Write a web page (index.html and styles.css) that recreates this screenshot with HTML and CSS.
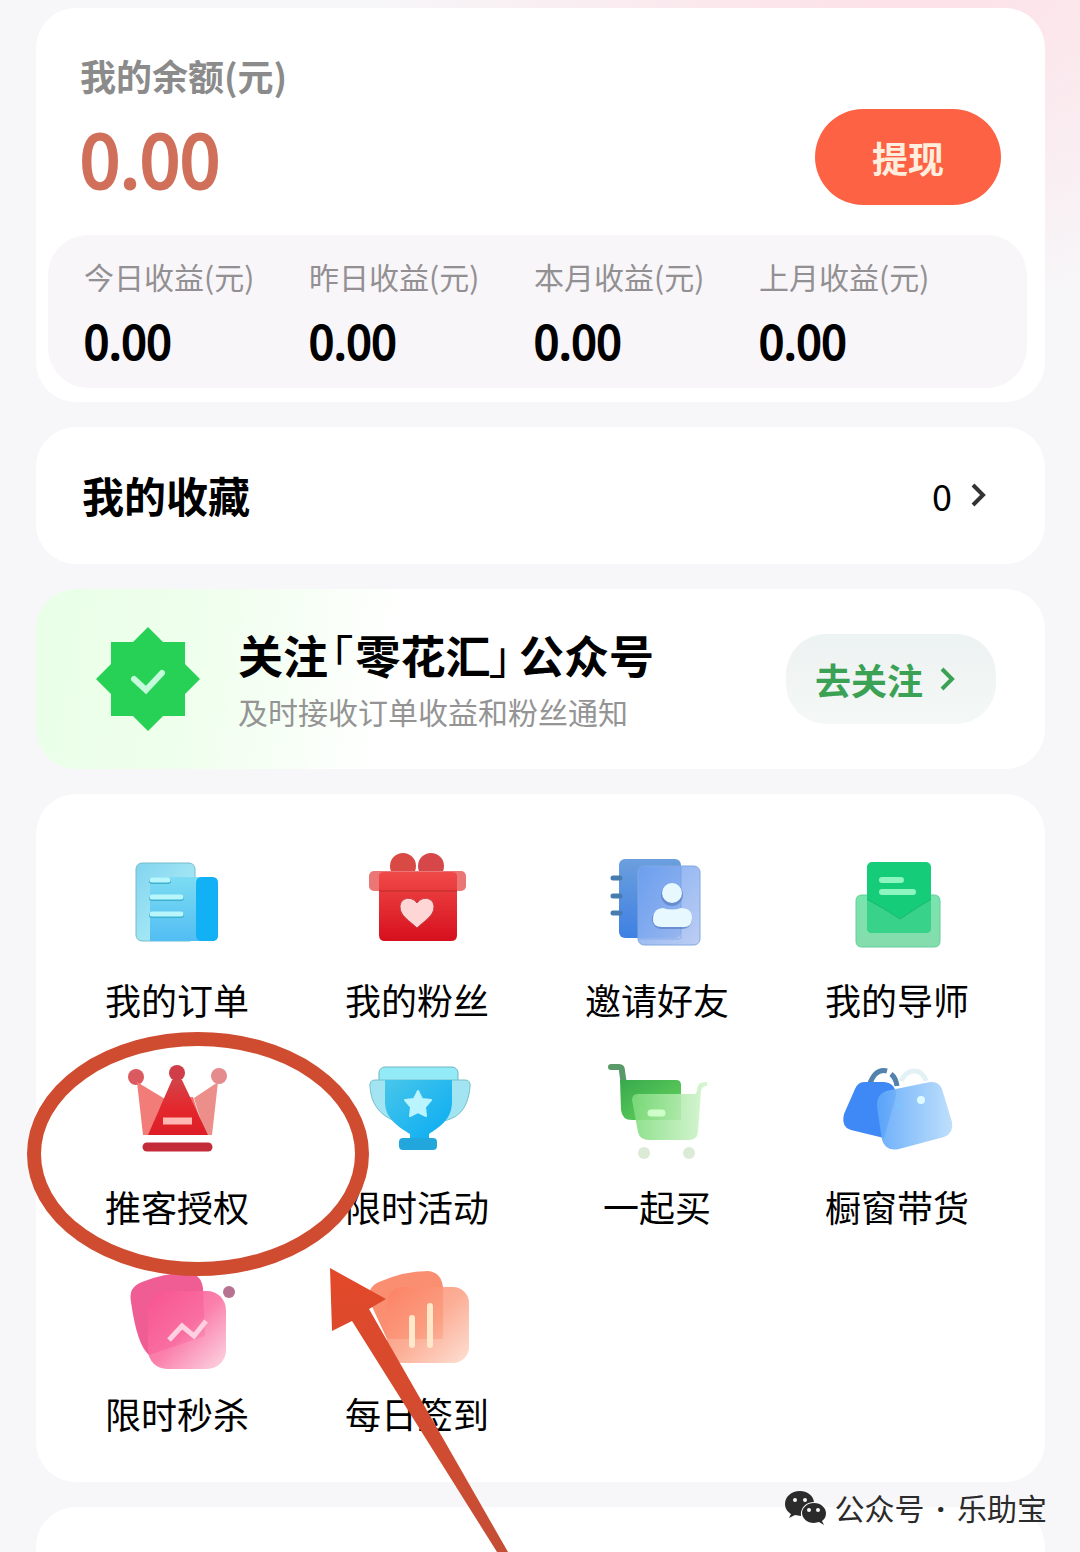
FILE: index.html
```
<!DOCTYPE html>
<html lang="zh-CN">
<head>
    <meta charset="UTF-8">
    <meta name="viewport" content="width=device-width, initial-scale=1.0">
    <title>我的</title>
    <link rel="stylesheet" href="styles.css">
</head>
<body>
    <main class="page">
        <section class="card wallet">
            <div class="wallet-head">
                <h2 class="wallet-title">我的余额(元)</h2>
                <div class="wallet-row">
                    <span class="amount">0.00</span>
                    <button class="btn-withdraw" type="button">提现</button>
                </div>
            </div>
            <div class="stats">
                <div><p class="stat-label">今日收益(元)</p><p class="stat-value">0.00</p></div>
                <div><p class="stat-label">昨日收益(元)</p><p class="stat-value">0.00</p></div>
                <div><p class="stat-label">本月收益(元)</p><p class="stat-value">0.00</p></div>
                <div><p class="stat-label">上月收益(元)</p><p class="stat-value">0.00</p></div>
            </div>
        </section>

        <a class="card favorites" href="#">
            <span class="favorites-title">我的收藏</span>
            <span class="favorites-count">0</span>
            <svg class="arrow" viewBox="0 0 16 26"><path d="M3 3l10 10L3 23"/></svg>
        </a>

        <section class="card follow">
            <svg class="badge" viewBox="0 0 104 104">
                <path d="M52 0l15 15h22v22l15 15-15 15v22H67l-15 15-15-15H15V67L0 52l15-15V15h22z" fill="#27d155"/>
                <path d="M38 52l12 11 16-17" fill="none" stroke="#c4fbda" stroke-width="6" stroke-linecap="round"/>
            </svg>
            <div class="follow-text">
                <h2>关注<span class="quote">「</span>零花汇<span class="quote quote-end">」</span>公众号</h2>
                <p>及时接收订单收益和粉丝通知</p>
            </div>
            <button class="btn-follow" type="button">
                去关注
                <svg class="arrow" viewBox="0 0 16 26"><path d="M3 3l10 10L3 23"/></svg>
            </button>
        </section>

        <nav class="card menu">
            <a href="#">
                <svg viewBox="0 0 120 120">
                    <defs>
                        <linearGradient id="doc1" x2="1" y2="1"><stop stop-color="#82d4f0"/><stop offset="1" stop-color="#b9f3f7"/></linearGradient>
                        <linearGradient id="doc2" x2="0" y2="1"><stop stop-color="#7cdcf2"/><stop offset="1" stop-color="#52bdf3"/></linearGradient>
                    </defs>
                    <rect x="19" y="23" width="59" height="78" rx="6" fill="url(#doc1)" stroke="#75bccb"/>
                    <path d="M33 37h62q6 0 6 6v52q0 6-6 6H33z" fill="url(#doc2)"/>
                    <path d="M85 37h10q6 0 6 6v52q0 6-6 6H85q-6 0-6-6V43q0-6 6-6z" fill="#12b0f5"/>
                    <path d="M35 41h16M35 58h29M35 75h29" stroke="#3fb1d0" stroke-width="6" stroke-linecap="round"/>
                    <path d="M35 40h16M35 57h29M35 74h29" stroke="#b8f6fc" stroke-width="5" stroke-linecap="round"/>
                </svg>
                <span>我的订单</span>
            </a>
            <a href="#">
                <svg viewBox="0 0 120 120">
                    <defs>
                        <linearGradient id="gift" x2="0" y2="1"><stop stop-color="#f04a48"/><stop offset="1" stop-color="#d60f1d"/></linearGradient>
                    </defs>
                    <circle cx="46" cy="26" r="13" fill="#d84a43"/>
                    <circle cx="74" cy="26" r="13" fill="#d6474a"/>
                    <rect x="12" y="31" width="97" height="20" rx="5" fill="#ea7775"/>
                    <path d="M22 36q0-4 5-4h68q5 0 5 4v59q0 6-6 6H28q-6 0-6-6z" fill="url(#gift)"/>
                    <path d="M22 51h78" stroke="#b92a2b" stroke-width="1"/>
                    <path d="M60 88C53 81 43 76 43 67c0-9 11-12 17-4 6-8 17-5 17 4 0 9-10 14-17 21z" fill="#ffd6d6" stroke="#c83e42"/>
                </svg>
                <span>我的粉丝</span>
            </a>
            <a href="#">
                <svg viewBox="0 0 120 120">
                    <defs>
                        <linearGradient id="book1" x2="0" y2="1"><stop stop-color="#6b9fdd"/><stop offset="1" stop-color="#3e80e3"/></linearGradient>
                        <linearGradient id="book2" x2="1" y2="1"><stop stop-color="#6c9ff2"/><stop offset="1" stop-color="#b2c6f0"/></linearGradient>
                    </defs>
                    <rect x="22" y="19" width="62" height="79" rx="6" fill="url(#book1)"/>
                    <path d="M16 38h7M16 56h7M16 73h7" stroke="#477caf" stroke-width="5" stroke-linecap="round"/>
                    <rect x="41" y="26" width="62" height="79" rx="6" fill="url(#book2)" fill-opacity=".86" stroke="#82a9df"/>
                    <path d="M84 27v70q0 2-2 2H42" fill="none" stroke="#6794dd" stroke-opacity=".5"/>
                    <circle cx="75" cy="55" r="11" fill="#5277bc" opacity=".6"/>
                    <rect x="55" y="70" width="40" height="19" rx="9" fill="#5277bc" opacity=".6"/>
                    <circle cx="75" cy="53" r="10" fill="#e8f8ff"/>
                    <path d="M66 68q9 3 18 0 11 0 11 10t-10 9H65q-10 0-9-9 1-10 10-10z" fill="#e8f8ff"/>
                </svg>
                <span>邀请好友</span>
            </a>
            <a href="#">
                <svg viewBox="0 0 120 120">
                    <defs>
                        <linearGradient id="mail" x2="0" y2="1"><stop stop-color="#79e4ae"/><stop offset="1" stop-color="#85dcad"/></linearGradient>
                    </defs>
                    <path d="M25 55h72q6 0 6 6v40q0 6-6 6H25q-6 0-6-6V61q0-6 6-6z" fill="url(#mail)" stroke="#62cf98"/>
                    <rect x="30" y="22" width="64" height="71" rx="5" fill="#15cd79"/>
                    <path d="M30 60q17 9 33 19 16-10 31-19v28q0 5-5 5H35q-5 0-5-5z" fill="#38d28b"/>
                    <path d="M30 59q17 9 33 20 16-11 31-20" fill="none" stroke="#20b86f"/>
                    <path d="M45 40h19M45 52h31" stroke="#8df5c0" stroke-width="6" stroke-linecap="round"/>
                </svg>
                <span>我的导师</span>
            </a>
            <a href="#">
                <svg viewBox="0 0 120 120">
                    <defs>
                        <linearGradient id="crown" x2="0" y2="1"><stop stop-color="#d2444a"/><stop offset=".5" stop-color="#e4282d"/><stop offset="1" stop-color="#dc1d26"/></linearGradient>
                    </defs>
                    <circle cx="19" cy="30" r="8" fill="#db5a60"/>
                    <circle cx="102" cy="29" r="8" fill="#e58a8d"/>
                    <path d="M20 35l28 17-8 36H26z" fill="#f17c78"/>
                    <path d="M101 35L77 51l11 37h7z" fill="#ec8f8b"/>
                    <path d="M48 52l-16 36h56L76 50z" fill="#f2706d"/>
                    <circle cx="60" cy="26" r="8" fill="#cf3e48"/>
                    <path d="M55 33h10l26 55H31z" fill="url(#crown)"/>
                    <path d="M46 74h29" stroke="#ffb8b3" stroke-width="7"/>
                    <path d="M30 100h61" stroke="#c52c3a" stroke-width="9" stroke-linecap="round"/>
                </svg>
                <span>推客授权</span>
            </a>
            <a href="#">
                <svg viewBox="0 0 120 120">
                    <defs>
                        <linearGradient id="cup" x2="1" y2="1"><stop stop-color="#48c6ea"/><stop offset="1" stop-color="#07abf3"/></linearGradient>
                    </defs>
                    <rect x="22" y="20" width="79" height="22" rx="6" fill="#94ebf8" stroke="#6fb5c0"/>
                    <path d="M18 33h90q6 0 5 7c-2 20-10 31-27 34H38C22 68 14 56 13 40q-1-7 5-7z" fill="#a3e4f2" stroke="#76c0cb"/>
                    <path d="M28 33h67v22c0 18-14 26-23 32v6H53v-6C42 80 28 72 28 55z" fill="url(#cup)"/>
                    <rect x="42" y="91" width="38" height="12" rx="4" fill="#21a7dc"/>
                    <path d="M61 44l4 8 9 1-6 7 1 9-8-4-8 4 1-9-6-7 9-1z" fill="#b9f4ff" stroke="#b9f4ff" stroke-width="2" stroke-linejoin="round"/>
                </svg>
                <span>限时活动</span>
            </a>
            <a href="#">
                <svg viewBox="0 0 120 120">
                    <defs>
                        <linearGradient id="cart1" x2="1" y2="1"><stop stop-color="#37a94c"/><stop offset="1" stop-color="#69d660"/></linearGradient>
                        <linearGradient id="cart2" x2="1" y2="0"><stop stop-color="#7fdc7c"/><stop offset="1" stop-color="#d3f4ce"/></linearGradient>
                    </defs>
                    <path d="M14 20h8q3 0 3 4l2 14" fill="none" stroke="#5a9a68" stroke-width="6" stroke-linecap="round"/>
                    <path d="M23 33h56q5 0 5 5v35H35q-10 0-11-10z" fill="url(#cart1)"/>
                    <path d="M35 53q0-6 6-6h58l2-8q1-4 9-4v4q-5 0-6 5l-3 41q-1 8-9 8H52q-9 0-11-8z" fill="url(#cart2)" fill-opacity=".88"/>
                    <path d="M54 66h11" stroke="#cfffc8" stroke-width="7" stroke-linecap="round"/>
                    <circle cx="47" cy="106" r="6" fill="#dcebd5"/>
                    <circle cx="92" cy="106" r="6" fill="#dcebd5"/>
                </svg>
                <span>一起买</span>
            </a>
            <a href="#">
                <svg viewBox="0 0 120 120">
                    <defs>
                        <linearGradient id="bag" x2="1" y2="0"><stop stop-color="#5da6fa"/><stop offset="1" stop-color="#b7dcfb"/></linearGradient>
                    </defs>
                    <path d="M33 36c4-10 10-14 17-12M54 27q5 4 6 12" fill="none" stroke="#5382ad" stroke-width="5"/>
                    <path d="M64 34q5-10 13-10 9 0 12 10" fill="none" stroke="#e2f2f4" stroke-width="5"/>
                    <path d="M27 35h20q12 1 12 14L47 91 14 83q-10-3-7-16l11-25q3-7 9-7z" fill="#3e89f5"/>
                    <path d="M49 44l44-9q9-1 12 7l10 33q2 11-8 15l-45 12q-13 3-17-9l-5-33q-1-12 9-16z" fill="url(#bag)" fill-opacity=".9"/>
                    <circle cx="62" cy="59" r="3" fill="#7dc4ff"/>
                    <circle cx="84" cy="53" r="4" fill="#dcfaff"/>
                </svg>
                <span>橱窗带货</span>
            </a>
            <a href="#">
                <svg viewBox="0 0 120 120">
                    <defs>
                        <linearGradient id="sale" x2="1" y2="1"><stop stop-color="#f95290"/><stop offset=".5" stop-color="#fa71a2"/><stop offset="1" stop-color="#fbd3e0"/></linearGradient>
                    </defs>
                    <path d="M25 28q22-9 44-9 15 0 17 15l2 48-56 19Q20 91 14 48q-3-15 11-20z" fill="#ef5d94"/>
                    <rect x="31" y="37" width="78" height="78" rx="19" fill="url(#sale)" fill-opacity=".9"/>
                    <path d="M52 86l13-14 12 10 12-15" fill="none" stroke="#ffd0df" stroke-width="5"/>
                    <circle cx="112" cy="38" r="6" fill="#b87291"/>
                </svg>
                <span>限时秒杀</span>
            </a>
            <a href="#">
                <svg viewBox="0 0 120 120">
                    <defs>
                        <linearGradient id="sign" x2="1" y2="1"><stop stop-color="#fd8064"/><stop offset=".5" stop-color="#fba083"/><stop offset="1" stop-color="#fddacd"/></linearGradient>
                    </defs>
                    <path d="M22 28q25-11 49-11 13 1 15 16v52H30L12 46q-1-14 10-18z" fill="#fa8e70"/>
                    <rect x="30" y="33" width="82" height="76" rx="16" fill="url(#sign)" fill-opacity=".85"/>
                    <path d="M55 64v27M73 52v39" stroke="#ffe7c9" stroke-width="6" stroke-linecap="round"/>
                </svg>
                <span>每日签到</span>
            </a>
        </nav>

        <section class="card more"></section>

        <!-- hand-drawn mark over the 推客授权 entry -->
        <svg class="mark" viewBox="0 0 490 520">
            <defs>
                <linearGradient id="pen" x2="0" y2="1"><stop stop-color="#e34829"/><stop offset="1" stop-color="#c44e36"/></linearGradient>
            </defs>
            <ellipse cx="171" cy="122" rx="164" ry="115" fill="none" stroke="#cf4c30" stroke-width="14"/>
            <path d="M303 236l56 31-17 10 139 243h-11L325 289l-20 10z" fill="url(#pen)"/>
        </svg>

        <div class="account">
            <svg viewBox="0 0 42 34">
                <path d="M15 0C6 0 0 6 0 13c0 5 3 8 6 10l-2 4 6-3 6 1c-1-8 5-14 13-14C28 4 22 0 15 0z" fill="#2b2b2b"/>
                <path d="M29 12c-7 0-12 5-12 10s5 10 12 10l5-1 5 3-2-4c3-2 4-5 4-8 0-5-5-10-12-10z" fill="#2b2b2b"/>
                <g fill="#f8f8f8"><circle cx="10" cy="9" r="2"/><circle cx="20" cy="9" r="2"/><circle cx="24" cy="19" r="2"/><circle cx="33" cy="19" r="2"/></g>
            </svg>
            <span>公众号<span class="dot">·</span>乐助宝</span>
        </div>
    </main>
</body>
</html>
```
FILE: styles.css
```
* {
    box-sizing: border-box;
}
body {
    margin: 0;
    font-family: "Noto Sans CJK SC", sans-serif;
    color: #000;
    background: #f7f7f9;
}
h2, p {
    margin: 0;
}
a {
    color: inherit;
    text-decoration: none;
}
button {
    border: none;
    font-family: inherit;
    cursor: pointer;
}
.page {
    position: relative;
    display: flex;
    flex-direction: column;
    gap: 25px;
    min-height: 100vh;
    padding: 8px 35px 0 36px;
    overflow: hidden;
    background: radial-gradient(ellipse 560px 360px at 84% -40px, #fddfe6, rgba(253, 223, 230, 0));
}
.card {
    background: #fff;
    border-radius: 40px;
}

/* balance */
.wallet {
    padding-bottom: 14px;
}
.wallet-head {
    padding: 43px 44px 30px;
}
.wallet-title {
    font-size: 36px;
    line-height: 48px;
    color: #8b8b8b;
}
.wallet-row {
    display: flex;
    justify-content: space-between;
    align-items: center;
    margin-top: 10px;
}
.amount {
    font-size: 72px;
    line-height: 96px;
    color: #d0705a;
    -webkit-text-stroke: 3px #d0705a;
}
.btn-withdraw {
    width: 186px;
    height: 96px;
    border-radius: 48px;
    background: #fd6244;
    color: #ffeedd;
    font-size: 36px;
    font-weight: bold;
}
.stats {
    display: grid;
    grid-template-columns: repeat(4, 1fr);
    margin: 0 18px 0 12px;
    padding: 18px 43px 18px 36px;
    border-radius: 40px;
    background: #f9f6fa;
}
.stat-label {
    font-size: 30px;
    line-height: 46px;
    color: #929092;
}
.stat-value {
    margin-top: 11px;
    font-size: 45px;
    line-height: 60px;
    -webkit-text-stroke: 2px #000;
}

/* favorites */
.favorites {
    display: flex;
    align-items: center;
    padding: 38px 59px 39px 46px;
    line-height: 60px;
}
.favorites-title {
    flex: 1;
    font-size: 42px;
    font-weight: bold;
}
.favorites-count {
    margin-right: 18px;
    font-size: 36px;
}
.arrow {
    width: 16px;
    height: 26px;
    fill: none;
    stroke: #333;
    stroke-width: 4;
}

/* follow */
.follow {
    display: flex;
    align-items: center;
    padding: 36px 49px 36px 60px;
    background: linear-gradient(100deg, #e8ffe6 0, #f0ffee 18%, #fff 36%);
}
.badge {
    width: 104px;
    height: 104px;
    margin-right: 38px;
}
.follow-text {
    flex: 1;
}
.follow-text h2 {
    font-size: 45px;
    line-height: 60px;
}
.follow-text p {
    margin-top: 4px;
    font-size: 30px;
    line-height: 44px;
    color: #949494;
}
.quote {
    margin: 0 2px 0 3px;
    font-weight: normal;
    font-feature-settings: "halt";
}
.quote-end {
    margin: 0 8px 0 -2px;
}
.btn-follow {
    display: flex;
    align-items: center;
    justify-content: center;
    gap: 16px;
    width: 210px;
    height: 90px;
    padding: 0 12px 0 0;
    border-radius: 40px;
    background: linear-gradient(#edf2f2, #f4f8f6);
    color: #3ba155;
    font-size: 36px;
    font-weight: bold;
}
.btn-follow .arrow {
    stroke: #3ba155;
}

/* menu */
.menu {
    display: grid;
    grid-template-columns: repeat(4, 1fr);
    row-gap: 24px;
    padding: 46px 28px 45px 21px;
}
.menu a {
    display: flex;
    flex-direction: column;
    align-items: center;
    gap: 15px;
    font-size: 36px;
    line-height: 48px;
}
.menu svg {
    width: 120px;
    height: 120px;
}

.more {
    flex: 1;
    min-height: 45px;
    border-radius: 40px 40px 0 0;
}

/* overlays */
.mark {
    position: absolute;
    left: 27px;
    top: 1032px;
    width: 490px;
    height: 520px;
    overflow: visible;
    pointer-events: none;
}
.account {
    position: absolute;
    right: 33px;
    bottom: 21px;
    display: flex;
    align-items: center;
    gap: 8px;
    font-size: 30px;
    line-height: 44px;
    color: #2b2b2b;
}
.account svg {
    width: 42px;
    height: 34px;
}
.dot {
    margin: 0 12px;
    font-family: "Noto Sans", sans-serif;
    font-weight: bold;
}
```
